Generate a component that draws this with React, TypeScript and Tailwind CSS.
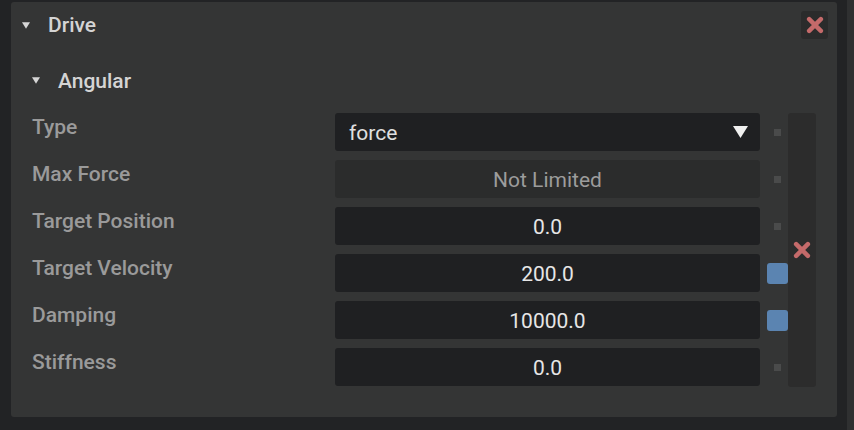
import React from 'react';

type Row = {
  label: string;
  value: string;
  kind: 'select' | 'disabled' | 'number';
  mark: 'dot' | 'blue';
};

const rows: Row[] = [
  { label: 'Type', value: 'force', kind: 'select', mark: 'dot' },
  { label: 'Max Force', value: 'Not Limited', kind: 'disabled', mark: 'dot' },
  { label: 'Target Position', value: '0.0', kind: 'number', mark: 'dot' },
  { label: 'Target Velocity', value: '200.0', kind: 'number', mark: 'blue' },
  { label: 'Damping', value: '10000.0', kind: 'number', mark: 'blue' },
  { label: 'Stiffness', value: '0.0', kind: 'number', mark: 'dot' },
];

function RedX({ size }: { size: number }) {
  return (
    <svg width={size} height={size} viewBox="0 0 20 20">
      <path
        d="M3.5 3.5 L16.5 16.5 M16.5 3.5 L3.5 16.5"
        stroke="#c46a6a"
        strokeWidth="5"
        strokeLinecap="round"
      />
    </svg>
  );
}

function Caret({ className }: { className: string }) {
  return (
    <svg className={className} viewBox="0 0 10 8">
      <path d="M0 0 L10 0 L5 8 Z" fill="currentColor" />
    </svg>
  );
}

function Field({ row }: { row: Row }) {
  if (row.kind === 'select') {
    return (
      <div className="h-[38px] w-[425px] rounded-[3px] bg-[#1f2022] flex items-center justify-between pl-[14px] pr-[12px] text-[#e0e0e0]">
        <span className="translate-y-[2px]">{row.value}</span>
        <Caret className="w-[15px] h-[12px] text-[#f0f0f0]" />
      </div>
    );
  }
  if (row.kind === 'disabled') {
    return (
      <div className="h-[38px] w-[425px] rounded-[3px] bg-[#2b2c2c] flex items-center justify-center text-[#9c9c9c] pt-[4px]">
        {row.value}
      </div>
    );
  }
  return (
    <div className="h-[38px] w-[425px] rounded-[3px] bg-[#1f2022] flex items-center justify-center text-[#e6e6e6] pt-[4px]">
      {row.value}
    </div>
  );
}

export default function App() {
  return (
    <div
      className="w-[854px] h-[430px] bg-[#222325] flex overflow-hidden text-[21px]"
      style={{ fontFamily: 'Roboto, "Noto Sans", sans-serif' }}
    >
      <div className="ml-[11px] mt-[2px] w-[826px] h-[415px] bg-[#343535] rounded-[3px] flex flex-col pl-[21px] pr-[21px]">
        <div className="flex items-center h-[46px] -ml-[10px]">
          <Caret className="w-[8px] h-[7px] text-[#d6d6d6] mr-[18px]" />
          <span className="text-[#d4d4d4] font-medium translate-y-[1px]">Drive</span>
          <div className="ml-auto mr-[-12px] w-[27px] h-[28px] rounded-[3px] bg-[#2a2b2b] flex items-center justify-center">
            <RedX size={18} />
          </div>
        </div>
        <div className="flex items-center h-[21px] mt-[22px]">
          <Caret className="w-[8px] h-[7px] text-[#d6d6d6] mr-[18px]" />
          <span className="text-[#d4d4d4] font-medium translate-y-[1px]">Angular</span>
        </div>
        <div className="flex mt-[22px]">
          <div className="flex flex-col gap-[9px] flex-1">
            {rows.map((row) => (
              <div key={row.label} className="flex h-[38px]">
                <div className="flex-1 text-[#9a9a9a] font-medium leading-[28px]">
                  {row.label}
                </div>
                <Field row={row} />
                <div className="w-[28px] flex items-center justify-end">
                  {row.mark === 'blue' ? (
                    <div className="w-[21px] h-[21px] rounded-[3px] bg-[#5b84b1]" />
                  ) : (
                    <div className="w-[7px] h-[7px] mr-[7px] bg-[#4a4b4b]" />
                  )}
                </div>
              </div>
            ))}
          </div>
          <div className="w-[28px] h-[274px] rounded-[3px] bg-[#2c2c2c] flex items-center justify-center">
            <RedX size={18} />
          </div>
        </div>
      </div>
      <div className="ml-[10px] w-[7px] h-full bg-[#2f3031]" />
    </div>
  );
}
